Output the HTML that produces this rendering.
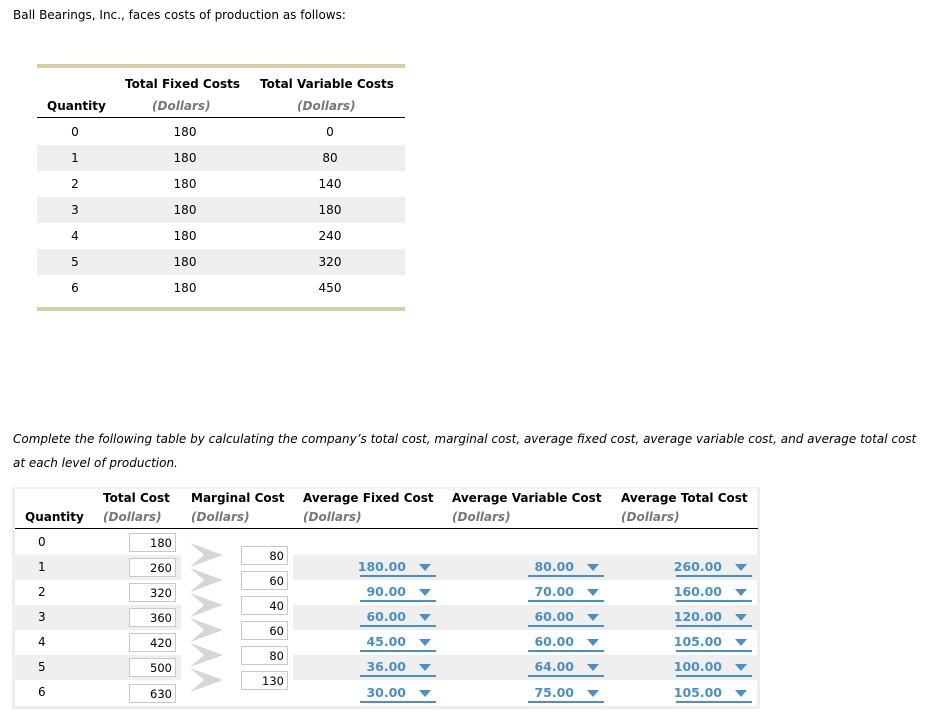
<!DOCTYPE html>
<html><head><meta charset="utf-8"><style>
*{margin:0;padding:0;box-sizing:border-box}
body{width:947px;height:714px;background:#fff;font-family:"DejaVu Sans",Verdana,"Liberation Sans",sans-serif;font-size:12px;color:#000;position:relative;overflow:hidden}
.a{position:absolute;white-space:nowrap}
.b{font-weight:bold}
.d{font-style:italic;font-weight:bold;color:#777}
.s{position:absolute;background:#efefef}
.c{text-align:center}
.inp{position:absolute;width:47px;height:19px;border:1px solid #c8c8c8;background:#fff;text-align:right;padding-right:3px;font-size:11.5px;line-height:18px}
.dd{position:absolute;width:76px;height:21px;border-bottom:2px solid #4a90c8;color:#4a90c8;font-weight:bold;font-size:12.5px}
.dd span{position:absolute;right:30px;top:3px}
.dd i{position:absolute;right:5px;top:8px;width:0;height:0;border-left:6px solid transparent;border-right:6px solid transparent;border-top:7px solid #4a90c8}
</style></head><body>
<div class="a" style="left:13px;top:8px">Ball Bearings, Inc., faces costs of production as follows:</div>

<div class="s" style="left:37px;top:64px;width:368px;height:4px;background:#d8cfa2"></div>
<div class="a b" style="left:125px;top:77px">Total Fixed Costs</div>
<div class="a b" style="left:260px;top:77px">Total Variable Costs</div>
<div class="a b" style="left:47px;top:99px">Quantity</div>
<div class="a d" style="left:152px;top:99px">(Dollars)</div>
<div class="a d" style="left:297px;top:99px">(Dollars)</div>
<div class="s" style="left:37px;top:117px;width:368px;height:1px;background:#000"></div>
<div class="s" style="left:37px;top:145px;width:368px;height:26px"></div>
<div class="s" style="left:37px;top:197px;width:368px;height:26px"></div>
<div class="s" style="left:37px;top:249px;width:368px;height:26px"></div>
<div class="s" style="left:37px;top:307px;width:368px;height:4px;background:#d8cfa2"></div>
<div class="a c" style="left:60px;width:30px;line-height:26px;top:119px">0<br>1<br>2<br>3<br>4<br>5<br>6</div>
<div class="a c" style="left:160px;top:119px;width:50px;line-height:26px">180<br>180<br>180<br>180<br>180<br>180<br>180</div>
<div class="a c" style="left:305px;top:119px;width:50px;line-height:26px">0<br>80<br>140<br>180<br>240<br>320<br>450</div>

<div class="a" style="left:13px;top:432px;font-style:italic">Complete the following table by calculating the company’s total cost, marginal cost, average fixed cost, average variable cost, and average total cost</div>
<div class="a" style="left:13px;top:456px;font-style:italic">at each level of production.</div>

<div class="s" style="left:12px;top:487px;width:748px;height:222px;background:#fff;border:3px solid #eee;border-top:2px solid #f4f4f4"></div>
<div class="a b" style="left:103px;top:491px">Total Cost</div>
<div class="a b" style="left:191px;top:491px">Marginal Cost</div>
<div class="a b" style="left:303px;top:491px">Average Fixed Cost</div>
<div class="a b" style="left:452px;top:491px">Average Variable Cost</div>
<div class="a b" style="left:621px;top:491px">Average Total Cost</div>
<div class="a b" style="left:25px;top:510px">Quantity</div>
<div class="a d" style="left:103px;top:510px">(Dollars)</div>
<div class="a d" style="left:191px;top:510px">(Dollars)</div>
<div class="a d" style="left:303px;top:510px">(Dollars)</div>
<div class="a d" style="left:452px;top:510px">(Dollars)</div>
<div class="a d" style="left:621px;top:510px">(Dollars)</div>
<div class="s" style="left:15px;top:528px;width:743px;height:1px;background:#000"></div>

<div class="s" style="left:15px;top:555px;width:166px;height:25px"></div>
<div class="s" style="left:293px;top:555px;width:465px;height:25px"></div>
<div class="s" style="left:15px;top:605px;width:166px;height:25px"></div>
<div class="s" style="left:293px;top:605px;width:465px;height:25px"></div>
<div class="s" style="left:15px;top:655px;width:166px;height:25px"></div>
<div class="s" style="left:293px;top:655px;width:465px;height:25px"></div>

<div class="a" style="left:38px;top:530px;line-height:25px">0<br>1<br>2<br>3<br>4<br>5<br>6</div>

<div class="inp" style="left:129px;top:533px">180</div>
<div class="inp" style="left:129px;top:558px">260</div>
<div class="inp" style="left:129px;top:583px">320</div>
<div class="inp" style="left:129px;top:608px">360</div>
<div class="inp" style="left:129px;top:633px">420</div>
<div class="inp" style="left:129px;top:658px">500</div>
<div class="inp" style="left:129px;top:684px">630</div>

<svg class="a" style="left:188px;top:540px" width="40" height="155">
<g fill="#d6d6d6">
<polygon points="2,3 35,15 2,27 16,15"/>
<polygon points="2,28 35,40 2,52 16,40"/>
<polygon points="2,53 35,65 2,77 16,65"/>
<polygon points="2,78 35,90 2,102 16,90"/>
<polygon points="2,103 35,115 2,127 16,115"/>
<polygon points="2,128 35,140 2,152 16,140"/>
</g></svg>

<div class="inp" style="left:241px;top:546px">80</div>
<div class="inp" style="left:241px;top:571px">60</div>
<div class="inp" style="left:241px;top:596px">40</div>
<div class="inp" style="left:241px;top:621px">60</div>
<div class="inp" style="left:241px;top:646px">80</div>
<div class="inp" style="left:241px;top:671px">130</div>

<div class="dd" style="left:360px;top:556px"><span>180.00</span><i></i></div>
<div class="dd" style="left:360px;top:581px"><span>90.00</span><i></i></div>
<div class="dd" style="left:360px;top:606px"><span>60.00</span><i></i></div>
<div class="dd" style="left:360px;top:631px"><span>45.00</span><i></i></div>
<div class="dd" style="left:360px;top:656px"><span>36.00</span><i></i></div>
<div class="dd" style="left:360px;top:682px"><span>30.00</span><i></i></div>

<div class="dd" style="left:528px;top:556px"><span>80.00</span><i></i></div>
<div class="dd" style="left:528px;top:581px"><span>70.00</span><i></i></div>
<div class="dd" style="left:528px;top:606px"><span>60.00</span><i></i></div>
<div class="dd" style="left:528px;top:631px"><span>60.00</span><i></i></div>
<div class="dd" style="left:528px;top:656px"><span>64.00</span><i></i></div>
<div class="dd" style="left:528px;top:682px"><span>75.00</span><i></i></div>

<div class="dd" style="left:676px;top:556px"><span>260.00</span><i></i></div>
<div class="dd" style="left:676px;top:581px"><span>160.00</span><i></i></div>
<div class="dd" style="left:676px;top:606px"><span>120.00</span><i></i></div>
<div class="dd" style="left:676px;top:631px"><span>105.00</span><i></i></div>
<div class="dd" style="left:676px;top:656px"><span>100.00</span><i></i></div>
<div class="dd" style="left:676px;top:682px"><span>105.00</span><i></i></div>
</body></html>
